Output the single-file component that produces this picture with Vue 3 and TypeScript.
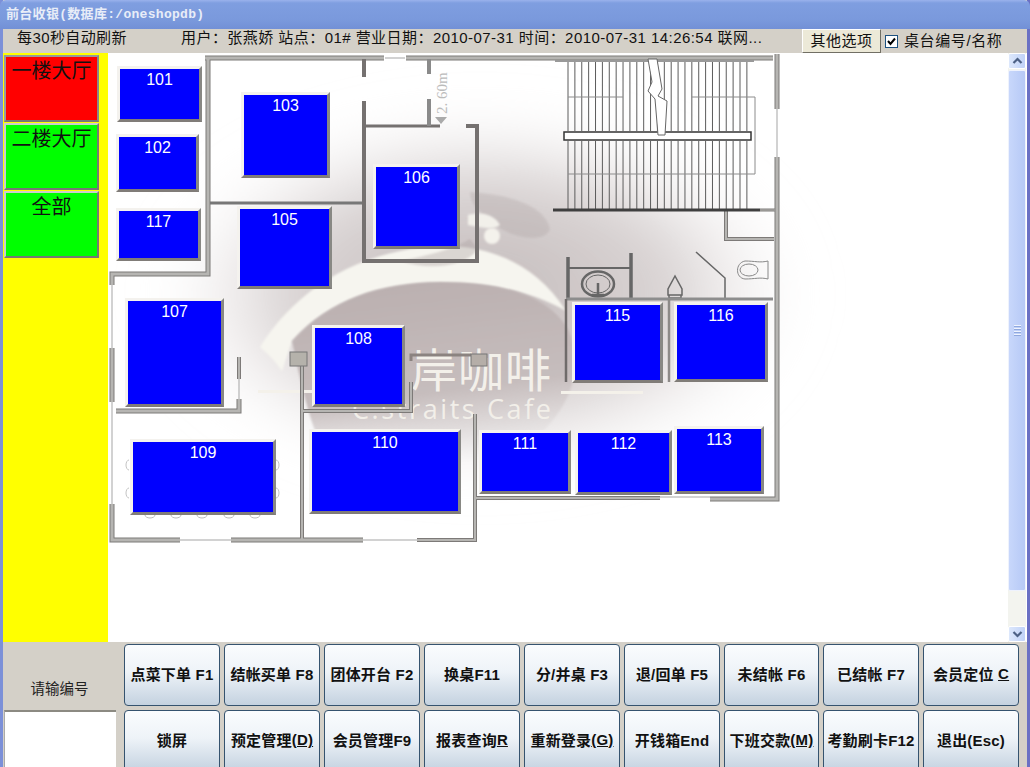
<script setup lang="ts">
interface Table { id: string; x: number; y: number; w: number; h: number }
const tables: Table[] = [
  { id: '101', x: 117, y: 67, w: 85, h: 56 },
  { id: '102', x: 116, y: 135, w: 83, h: 58 },
  { id: '117', x: 116, y: 209, w: 85, h: 53 },
  { id: '103', x: 241, y: 93, w: 89, h: 86 },
  { id: '105', x: 237, y: 207, w: 95, h: 83 },
  { id: '106', x: 373, y: 165, w: 87, h: 85 },
  { id: '107', x: 125, y: 299, w: 99, h: 109 },
  { id: '108', x: 312, y: 326, w: 93, h: 82 },
  { id: '109', x: 130, y: 440, w: 146, h: 76 },
  { id: '110', x: 309, y: 430, w: 152, h: 85 },
  { id: '111', x: 479, y: 431, w: 92, h: 64 },
  { id: '112', x: 575, y: 431, w: 97, h: 65 },
  { id: '113', x: 674, y: 427, w: 90, h: 68 },
  { id: '115', x: 572, y: 303, w: 91, h: 81 },
  { id: '116', x: 674, y: 303, w: 94, h: 80 },
]
const tableStyle = (t: Table) => ({
  left: `${t.x - 108}px`,
  top: `${t.y - 54}px`,
  width: `${t.w}px`,
  height: `${t.h}px`,
})
const areas = [
  { name: '一楼大厅', cls: 'red' },
  { name: '二楼大厅', cls: 'green' },
  { name: '全部', cls: 'green' },
]
const topRow = ['点菜下单 F1', '结帐买单 F8', '团体开台 F2', '换桌F11', '分/并桌 F3', '退/回单 F5', '未结帐 F6', '已结帐 F7']
const bottomRow = ['锁屏', '预定管理', '会员管理F9', '报表查询', '重新登录', '开钱箱End', '下班交款', '考勤刷卡F12', '退出(Esc)']
const keyOf: Record<string, string> = { 预定管理: '(D)', 报表查询: 'R', 重新登录: '(G)', 下班交款: '(M)' }
const treads = Array.from({ length: 27 }, (_, i) => 568 + i * 6.88)

// Thick double-lined walls of the floor plan: [path, width]
const walls: Array<[string, number]> = [
  ['M205 59H384', 5],
  ['M406 59H773', 5],
  ['M208 59V275H112V286', 5],
  ['M112 349V403', 5],
  ['M112 505V541H180', 5],
  ['M231 541H363', 5],
  ['M417 541H475V415', 4],
  ['M302 367V541', 4],
  ['M116 412H239V400', 5],
  ['M239 358V380', 4],
  ['M302 412H411V383', 4],
  ['M777 55V110', 5],
  ['M777 158V500H710', 5],
  ['M475 499H660', 4],
  ['M726 212V240H774', 4],
  ['M760 211H775', 3],
]
// Thin wall lines: door leaves and openings
const thin = [
  'M385 59H405', 'M112 286V349', 'M112 403V505', 'M180 541H231', 'M363 541H417',
  'M239 380V400', 'M777 110V158', 'M660 498H710',
]
const chairs = [150, 176, 202, 229, 255]
</script>

<template>
  <div class="window">
    <div class="titlebar">前台收银(数据库:/oneshopdb)</div>
    <div class="frame">
      <div class="status">
        <span class="refresh">每30秒自动刷新</span>
        <span class="info">用户：张燕娇 站点：01# 营业日期：2010-07-31 时间：2010-07-31 14:26:54 联网...</span>
        <button class="other">其他选项</button>
        <label class="check"><span class="box"><svg width="9" height="9" viewBox="0 0 9 9"><path d="M1 4l2.5 3L8 1.5" fill="none" stroke="#000" stroke-width="2"/></svg></span>桌台编号/名称</label>
      </div>
      <div class="main">
        <div class="side">
          <button v-for="a in areas" :key="a.name" class="area" :class="a.cls">{{ a.name }}</button>
        </div>
        <div class="canvas">
          <svg class="plan" width="900" height="588" viewBox="108 54 900 588">
            <defs>
              <radialGradient id="wash" cx="0.5" cy="0.5" r="0.5">
                <stop offset="0" stop-color="#c2b9b9" />
                <stop offset=".6" stop-color="#d0c9c9" stop-opacity=".8" />
                <stop offset="1" stop-color="#f2f0f0" stop-opacity="0" />
              </radialGradient>
              <linearGradient id="disc" x1="0.4" y1="0" x2="0.6" y2="1">
                <stop offset="0" stop-color="#bbb0b0" />
                <stop offset=".6" stop-color="#c6bdbd" />
                <stop offset="1" stop-color="#e4e0e0" stop-opacity="0" />
              </linearGradient>
              <filter id="soft" x="-30%" y="-30%" width="160%" height="160%"><feGaussianBlur stdDeviation="26" /></filter>
              <filter id="soft2" x="-20%" y="-20%" width="140%" height="140%"><feGaussianBlur stdDeviation="1.2" /></filter>
            </defs>
            <ellipse cx="480" cy="295" rx="325" ry="185" fill="url(#wash)" filter="url(#soft)" />
            <!-- white swoosh of the logo -->
            <path d="M260 348C290 300 340 262 410 250C470 240 530 255 566 312C530 292 490 284 440 284C380 284 330 300 292 342L282 372C275 362 268 355 260 348Z" fill="#f6f5ef" filter="url(#soft2)" />
            <!-- dark disc -->
            <path d="M292 342C330 300 380 284 440 283C510 283 550 300 568 330C590 380 560 430 500 465L330 465C310 430 300 380 292 342Z" fill="url(#disc)" filter="url(#soft2)" />
            <path d="M470 193C505 195 545 205 550 230C545 245 510 240 490 222C480 212 470 206 470 193Z" fill="#a89d9d" opacity=".28" filter="url(#soft2)" />
            <path d="M468 216C482 212 495 216 500 226C492 232 480 228 468 226Z" fill="#f2f0ea" filter="url(#soft2)" />
            <circle cx="492" cy="237" r="8" fill="#f4f2ec" filter="url(#soft2)" />
            <path d="M400 262C430 272 465 268 478 250L470 240C450 252 420 258 400 262Z" fill="#a89d9d" opacity=".35" filter="url(#soft2)" />
            <g fill="#f4f1ea">
              <rect x="258" y="391" width="62" height="3" />
              <rect x="561" y="392" width="82" height="3" />
            </g>
            <text x="411" y="388" class="brand-cn">岸咖啡</text>
            <text x="352" y="420" class="brand-en">C.straits Cafe</text>

            <g fill="none">
              <path v-for="(w, i) in walls" :key="'o' + i" :d="w[0]" stroke="#7d7a78" :stroke-width="w[1]" />
              <path v-for="(w, i) in walls" :key="'i' + i" :d="w[0]" stroke="#b6b5b2" :stroke-width="w[1] - 2" />
              <path v-for="(d, i) in thin" :key="'t' + i" :d="d" stroke="#a5a5a5" />
              <path d="M210 204H362" stroke="#777" stroke-width="3" />
              <path d="M364 60V78M364 102V262H477V127H466" stroke="#757170" stroke-width="4" />
              <path d="M364 127H440" stroke="#757170" stroke-width="3" />
              <path d="M429 60V75M429 100V127" stroke="#8a8a8a" stroke-width="4" />
              <path d="M411 362V356H471" stroke="#8b8380" stroke-width="3" />
            </g>
            <rect x="290" y="353" width="17" height="14" fill="#b5b2ab" stroke="#777" />
            <rect x="471" y="355" width="16" height="12" fill="#b5aea8" stroke="#777" />

            <g fill="none" stroke="#5c5c5c">
              <path v-for="x in treads" :key="'u' + x" :d="`M${x} 62V132`" />
              <path v-for="x in treads" :key="'l' + x" :d="`M${x} 142V210`" />
              <path d="M568 98H623M692 98H755V175H568" stroke="#8c8c8c" />
            </g>
            <path d="M555 62H754" stroke="#999" stroke-width="2" />
            <rect x="564" y="133" width="187" height="8" fill="#fff" stroke="#333" stroke-width="1.5" />
            <path d="M553 211H760" stroke="#3f3f3f" stroke-width="3" fill="none" />
            <path d="M648 60L652 83 648 92 655 100 658 136H665L667 102 658 97 662 90 657 60Z" fill="#fff" stroke="#666" />

            <g fill="none" stroke="#666">
              <path d="M568 258V300M631 254V300" stroke-width="3.5" />
              <path d="M568 269H630" stroke-width="2" />
              <ellipse cx="598" cy="285" rx="16" ry="12.5" stroke-width="2.5" />
              <ellipse cx="598" cy="285" rx="12" ry="9" stroke-width="1" />
              <path d="M598 284V296M592 296H604" stroke-width="2.5" />
              <path d="M668 296V290L675 277 682 290V296ZM669 296V299H681V296" stroke-width="1.5" />
              <path d="M696 253L725 279V299" stroke-width="1.5" />
              <path d="M768 262C760 264 755 262 745 262C735 264 735 279 745 280C755 280 760 278 768 280V262Z" stroke="#888" />
              <ellipse cx="749" cy="271" rx="9" ry="6" stroke="#888" />
              <path d="M566 300H773" stroke="#8d8d8d" stroke-width="3" />
              <path d="M566 300V383" stroke-width="2.5" stroke="#6f6b6a" />
              <path d="M669 300V383" stroke-width="2.5" stroke="#8d8a88" />
              <path v-for="x in chairs" :key="x" :d="`M${x - 5} 516A5 3 0 0 0 ${x + 5} 516`" stroke="#bbb" />
              <path d="M129 461A3 5 0 0 0 129 471M129 489A3 5 0 0 0 129 499M276 461A3 5 0 0 1 276 471M276 489A3 5 0 0 1 276 499" stroke="#c4c4c4" />
            </g>
            <text x="447" y="115" class="dim" transform="rotate(-90 447 115)">2. 60m</text>
            <path d="M435 118H447L441 125Z" fill="#aaa" />
          </svg>
          <button v-for="t in tables" :key="t.id" class="table" :style="tableStyle(t)">{{ t.id }}</button>
        </div>
        <div class="scroll">
          <span class="arrow"><svg width="11" height="8" viewBox="0 0 11 8"><path d="M1.5 6l4-4 4 4" fill="none" stroke="#4d6185" stroke-width="2.2"/></svg></span>
          <span class="thumb"><i></i><i></i><i></i><i></i></span>
          <span class="arrow"><svg width="11" height="8" viewBox="0 0 11 8"><path d="M1.5 2l4 4 4-4" fill="none" stroke="#4d6185" stroke-width="2.2"/></svg></span>
        </div>
      </div>
      <div class="bottom">
        <div class="inputcol">
          <div class="prompt">请输编号</div>
          <div class="input"></div>
        </div>
        <div class="cmds">
          <button v-for="c in topRow" :key="c" class="cmd">{{ c }}</button>
          <button class="cmd">会员定位 <u>C</u></button>
          <button v-for="c in bottomRow" :key="c" class="cmd">{{ c }}<u v-if="keyOf[c]">{{ keyOf[c] }}</u></button>
        </div>
      </div>
    </div>
  </div>
</template>

<style>
html, body { margin: 0; overflow: hidden; background: #d4d0c8; }
</style>

<style scoped>
.window {
  width: 1030px; height: 767px; overflow: hidden; display: flex; flex-direction: column; position: relative;
  font-family: "Liberation Sans", "Noto Sans CJK SC", sans-serif;
  background: linear-gradient(90deg, #7c90d8 0, #7c90d8 3px, #d4d0c8 3px, #d4d0c8 1027px, #6a70c4 1027px);
}
.titlebar {
  height: 29px; box-sizing: border-box; padding: 6px 0 0 6px; flex: none;
  border-radius: 6px 6px 0 0; color: #e8edf8; font-size: 13px; font-weight: 700; line-height: 18px; letter-spacing: .3px;
  font-family: "Liberation Mono", "Noto Sans CJK SC", monospace;
  background: linear-gradient(#9ab2ec 0, #7f9ee0 3px, #7a99dc 20px, #7290d6 29px);
}
.frame { flex: 1; min-height: 0; margin: 0 3px; display: flex; flex-direction: column; background: #d4d0c8; }
.status { height: 24px; flex: none; display: flex; align-items: flex-start; font-size: 15px; line-height: 18px; color: #111; }
.refresh { margin: 0 0 0 14px; width: 164px; white-space: nowrap; letter-spacing: .4px; }
.info { width: 621px; white-space: nowrap; letter-spacing: .45px; }
.other {
  width: 79px; height: 24px; padding: 0; box-sizing: border-box; background: #ece9d8; font: inherit; font-size: 15px; color: #111;
  border: 1px solid; border-color: #fff #716f64 #716f64 #fff; letter-spacing: .5px;
}
.check { display: flex; align-items: center; height: 24px; margin-left: 4px; font-size: 15px; white-space: nowrap; letter-spacing: .6px; }
.box {
  width: 11px; height: 11px; border: 1px solid #1c5180; background: #fff; display: flex; align-items: center; justify-content: center;
  margin-right: 6px;
}
.main { height: 589px; flex: none; display: flex; background: #fff; }
.side {
  width: 105px; flex: none; background: #ff0; box-sizing: border-box; padding: 2px 9px 0 1px;
  display: flex; flex-direction: column; gap: 1px;
}
.area {
  height: 67px; flex: none; padding: 2px 0 0; box-sizing: border-box; border: 2px solid; border-color: #fff #777 #777 #fff;
  font-family: "Noto Sans CJK SC", sans-serif; font-size: 20px; line-height: 22px; color: #111;
  display: flex; align-items: flex-start; justify-content: center;
}
.area.red { background: #f00; border-color: #999 #888 #777 #999; }
.area.green { background: #0f0; border-color: #ccc #777 #777 #ccc; }
.canvas { position: relative; flex: none; width: 900px; overflow: hidden; }
.plan { position: absolute; left: 0; top: 0; }
.brand-cn { font-family: "Noto Sans CJK SC", sans-serif; font-size: 46px; fill: #f3f0ea; letter-spacing: 1px; }
.brand-en { font-family: "Open Sans", sans-serif; font-size: 27px; fill: #f2efe9; letter-spacing: 2.6px; }
.dim { font-family: "Liberation Serif", serif; font-size: 15px; fill: #bbb; }
.table {
  position: absolute; box-sizing: border-box; background: #00f; color: #fff; padding: 2px 0 0;
  display: flex; align-items: flex-start; justify-content: center;
  border: 3px solid; border-color: #f4f2ee #888884 #807c78 #f4f2ee; font: 16px/18px "Liberation Sans", sans-serif;
}
.scroll {
  width: 18px; flex: none; display: flex; flex-direction: column; gap: 1px; box-sizing: border-box; background: #f3f4ef;
}
.arrow {
  height: 16px; flex: none; display: flex; align-items: center; justify-content: center; border-radius: 2px;
  background: linear-gradient(90deg, #dde8fc, #c0d2f8); border: 1px solid #fff; box-sizing: border-box;
}
.thumb {
  flex: 1; border-radius: 2px; background: linear-gradient(90deg, #c8d7fb, #b6c9f6); display: flex; flex-direction: column;
  align-items: center; justify-content: center; gap: 1px; border: 1px solid #eef2fd; box-sizing: border-box; margin-bottom: 34px;
}
.thumb i { width: 7px; height: 1px; background: #eef3fd; border-bottom: 1px solid #8fa8de; }
.bottom { flex: 1; min-height: 0; display: flex; overflow: hidden; }
.inputcol { width: 113px; flex: none; display: flex; flex-direction: column; }
.prompt { height: 68px; box-sizing: border-box; padding-top: 37px; text-align: center; font-size: 14.5px; line-height: 20px; color: #222; }
.input { flex: 1; background: #fff; margin-left: 1px; border-top: 2px solid #8c8a82; border-left: 1px solid #aaa; }
.cmds {
  margin-left: 8px; padding-top: 2px; display: grid; grid-template-columns: repeat(6, 96px) 95px 96px 96px; grid-auto-rows: 62px; column-gap: 4px; row-gap: 4px;
}
.cmd {
  box-sizing: border-box; padding: 0 0 3px; border: 1px solid #35536f; border-radius: 4px; width: 100%;
  background: linear-gradient(#fafcfe, #eef3f8 45%, #c4d2e0); color: #111; font: 700 15px "Liberation Sans", "Noto Sans CJK SC", sans-serif;
  white-space: pre; display: flex; align-items: center; justify-content: center; letter-spacing: .2px;
}
</style>
